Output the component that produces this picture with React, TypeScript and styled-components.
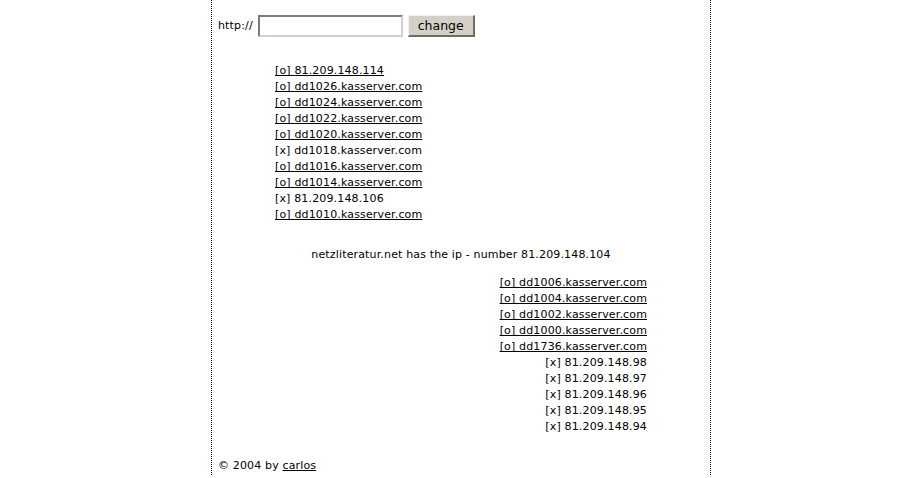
import styled, { createGlobalStyle } from "styled-components";

const GlobalStyle = createGlobalStyle`
  html, body {
    margin: 0;
    padding: 0;
    background: #ffffff;
  }

  body {
    font-family: "DejaVu Sans", Verdana, sans-serif;
    font-size: 11px;
    letter-spacing: 0.15px;
    color: #000000;
  }
`;

type Host = { name: string; alive: boolean };

const upstream: Host[] = [
  { name: "81.209.148.114", alive: true },
  { name: "dd1026.kasserver.com", alive: true },
  { name: "dd1024.kasserver.com", alive: true },
  { name: "dd1022.kasserver.com", alive: true },
  { name: "dd1020.kasserver.com", alive: true },
  { name: "dd1018.kasserver.com", alive: false },
  { name: "dd1016.kasserver.com", alive: true },
  { name: "dd1014.kasserver.com", alive: true },
  { name: "81.209.148.106", alive: false },
  { name: "dd1010.kasserver.com", alive: true },
];

const downstream: Host[] = [
  { name: "dd1006.kasserver.com", alive: true },
  { name: "dd1004.kasserver.com", alive: true },
  { name: "dd1002.kasserver.com", alive: true },
  { name: "dd1000.kasserver.com", alive: true },
  { name: "dd1736.kasserver.com", alive: true },
  { name: "81.209.148.98", alive: false },
  { name: "81.209.148.97", alive: false },
  { name: "81.209.148.96", alive: false },
  { name: "81.209.148.95", alive: false },
  { name: "81.209.148.94", alive: false },
];

const HostRow = ({ host }: { host: Host }) =>
  host.alive ? (
    <HostLink href="#">[o] {host.name}</HostLink>
  ) : (
    <HostDead>[x] {host.name}</HostDead>
  );

const App = () => {
  return (
    <>
      <GlobalStyle />
      <Frame>
        <UrlForm onSubmit={(e) => e.preventDefault()}>
          <Label>http://</Label>
          <UrlInput type="text" />
          <ChangeButton type="submit">change</ChangeButton>
        </UrlForm>

        <Trace>
          <HostList $align="left">
            {upstream.map((h) => (
              <HostRow key={h.name} host={h} />
            ))}
          </HostList>

          <Notice>netzliteratur.net has the ip - number 81.209.148.104</Notice>

          <HostList $align="right">
            {downstream.map((h) => (
              <HostRow key={h.name} host={h} />
            ))}
          </HostList>
        </Trace>

        <Footer>
          © 2004 by <FooterLink href="#">carlos</FooterLink>
        </Footer>
      </Frame>
    </>
  );
};

const Frame = styled.div`
  box-sizing: border-box;
  width: 500px;
  margin-left: calc(50% - 251px);
  min-height: 475px;
  padding: 14px 6px 1px 6px;
  border-left: 1px dotted #000000;
  border-right: 1px dotted #000000;
  display: flex;
  flex-direction: column;
`;

const UrlForm = styled.form`
  display: flex;
  align-items: center;
  margin: 0;
`;

const Label = styled.span`
  margin-right: 5px;
`;

const UrlInput = styled.input`
  box-sizing: border-box;
  width: 145px;
  height: 22px;
  margin: 0 5px 0 0;
  padding: 1px 2px;
  background: #ffffff;
  border-style: solid;
  border-width: 2px;
  border-color: #7a7a7a #d4d0c8 #d4d0c8 #7a7a7a;
  font-family: "DejaVu Sans", sans-serif;
  font-size: 11px;
  outline: none;
`;

const ChangeButton = styled.button`
  box-sizing: border-box;
  width: 67px;
  height: 22px;
  margin-top: 1px;
  padding: 0;
  background: #d4d0c8;
  border-style: solid;
  border-width: 1px 2px 2px 1px;
  border-color: #f4f2ee #6f6c66 #6f6c66 #f4f2ee;
  font-family: "DejaVu Sans", sans-serif;
  font-size: 12.5px;
  color: #000000;
`;

const Trace = styled.div`
  display: flex;
  flex-direction: column;
  padding: 26px 57px 0 57px;
`;

const HostList = styled.div<{ $align: "left" | "right" }>`
  display: flex;
  flex-direction: column;
  align-items: ${(p) => (p.$align === "left" ? "flex-start" : "flex-end")};
  line-height: 16px;
`;

const HostLink = styled.a`
  color: #000000;
  text-decoration: underline;
`;

const HostDead = styled.span`
  color: #000000;
`;

const Notice = styled.p`
  margin: 24px 0 12px 0;
  line-height: 16px;
  text-align: center;
`;

const Footer = styled.div`
  margin-top: auto;
  line-height: 16px;
`;

const FooterLink = styled.a`
  color: #000000;
  text-decoration: underline;
`;

export default App;
